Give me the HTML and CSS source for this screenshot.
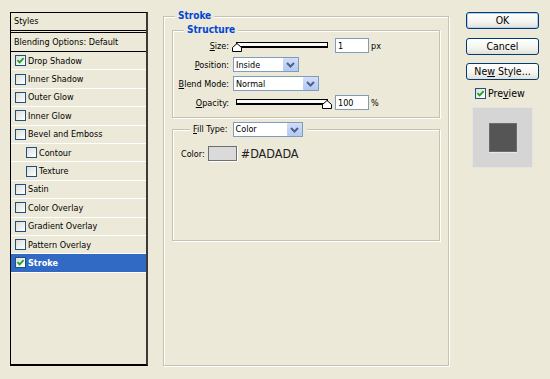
FILE: index.html
```html
<!DOCTYPE html>
<html lang="en">
<head>
  <meta charset="UTF-8">
  <meta name="viewport" content="width=device-width, initial-scale=1.0">
  <title>Layer Style</title>
  <link rel="stylesheet" href="styles.css">
</head>
<body>
  <div class="dialog">

    <!-- lista de estilos -->
    <div class="styles-list">
      <div class="list-head">Styles</div>
      <div class="list-blend">Blending Options: Default</div>
      <div class="list-item"><span class="check"><svg width="9" height="9" viewBox="0 0 9 9"><path d="M1.5 4.2 L3.6 6.4 L7.6 2.2" fill="none" stroke="#21A121" stroke-width="1.8"/></svg></span>Drop Shadow</div>
      <div class="list-item"><span class="check"></span>Inner Shadow</div>
      <div class="list-item"><span class="check"></span>Outer Glow</div>
      <div class="list-item"><span class="check"></span>Inner Glow</div>
      <div class="list-item"><span class="check"></span>Bevel and Emboss</div>
      <div class="list-item sub"><span class="check"></span>Contour</div>
      <div class="list-item sub"><span class="check"></span>Texture</div>
      <div class="list-item"><span class="check"></span>Satin</div>
      <div class="list-item"><span class="check"></span>Color Overlay</div>
      <div class="list-item"><span class="check"></span>Gradient Overlay</div>
      <div class="list-item"><span class="check"></span>Pattern Overlay</div>
      <div class="list-item selected"><span class="check"><svg width="9" height="9" viewBox="0 0 9 9"><path d="M1.5 4.2 L3.6 6.4 L7.6 2.2" fill="none" stroke="#21A121" stroke-width="1.8"/></svg></span>Stroke</div>
    </div>

    <!-- painel Stroke -->
    <fieldset class="group main">
      <legend>Stroke</legend>

      <fieldset class="group structure">
        <legend>Structure</legend>
        <div class="rows">
          <div class="form-row">
            <span class="lbl"><u>S</u>ize:</span>
            <div class="slider">
              <div class="track">
                <svg class="thumb" style="left: 0%" width="10" height="9" viewBox="0 0 10 9"><path d="M0.5 8.5 V4.5 L5 0.5 L9.5 4.5 V8.5 Z" fill="#fff" stroke="#000"/></svg>
              </div>
            </div>
            <input class="num" type="text" value="1">
            <span class="unit">px</span>
          </div>
          <div class="form-row">
            <span class="lbl"><u>P</u>osition:</span>
            <div class="select select-position">
              <span>Inside</span>
              <span class="arrow"><svg width="9" height="6" viewBox="0 0 9 6"><path d="M1 1 L4.5 4.5 L8 1" fill="none" stroke="#4D6185" stroke-width="2"/></svg></span>
            </div>
          </div>
          <div class="form-row">
            <span class="lbl"><u>B</u>lend Mode:</span>
            <div class="select select-blend">
              <span>Normal</span>
              <span class="arrow"><svg width="9" height="6" viewBox="0 0 9 6"><path d="M1 1 L4.5 4.5 L8 1" fill="none" stroke="#4D6185" stroke-width="2"/></svg></span>
            </div>
          </div>
          <div class="form-row">
            <span class="lbl"><u>O</u>pacity:</span>
            <div class="slider">
              <div class="track">
                <svg class="thumb" style="left: 100%" width="10" height="9" viewBox="0 0 10 9"><path d="M0.5 8.5 V4.5 L5 0.5 L9.5 4.5 V8.5 Z" fill="#fff" stroke="#000"/></svg>
              </div>
            </div>
            <input class="num" type="text" value="100">
            <span class="unit">%</span>
          </div>
        </div>
      </fieldset>

      <fieldset class="group fill">
        <legend class="fill-legend">
          <span class="fill-label"><u>F</u>ill Type:</span>
          <span class="select select-fill">
            <span>Color</span>
            <span class="arrow"><svg width="9" height="6" viewBox="0 0 9 6"><path d="M1 1 L4.5 4.5 L8 1" fill="none" stroke="#4D6185" stroke-width="2"/></svg></span>
          </span>
        </legend>
        <div class="color-row">
          <span>Color:</span>
          <span class="swatch"></span>
          <span class="hex">#DADADA</span>
        </div>
      </fieldset>
    </fieldset>

    <!-- botões -->
    <div class="side">
      <button class="btn btn-default">OK</button>
      <button class="btn btn-cancel">Cancel</button>
      <button class="btn btn-new">Ne<u>w</u> Style...</button>
      <label class="preview-check"><span class="check"><svg width="9" height="9" viewBox="0 0 9 9"><path d="M1.5 4.2 L3.6 6.4 L7.6 2.2" fill="none" stroke="#21A121" stroke-width="1.8"/></svg></span>Pre<u>v</u>iew</label>
      <div class="preview-box">
        <div class="preview-square"></div>
      </div>
    </div>

  </div>
</body>
</html>
```

FILE: styles.css
```css
:root {
  --face: #ECE9D8;
  --etch: #C5C2B2;
  --legend: #0046D5;
  --highlight: #316AC5;
  --field: #7F9DB9;
}

* {
  box-sizing: border-box;
  margin: 0;
  padding: 0;
}

body {
  width: 550px;
  height: 379px;
  overflow: hidden;
  background: var(--face);
  font-family: "DejaVu Sans Condensed", "DejaVu Sans", sans-serif;
  font-stretch: condensed;
  font-size: 9px;
  color: #000;
}

.dialog {
  display: flex;
  align-items: flex-start;
  padding: 10px 0 0 10px;
}

/* lista */
.styles-list {
  width: 138px;
  height: 354px;
  margin-top: 2px;
  border: 1px solid #000;
  border-right: 2px solid #3a3a3a;
  border-bottom-width: 2px;
}

.list-head {
  height: 20px;
  line-height: 17px;
  padding-left: 3px;
  border-bottom: 3px double #000;
}

.list-blend {
  height: 19px;
  line-height: 18px;
  padding-left: 3px;
  border-bottom: 1px solid #000;
}

.list-item {
  display: flex;
  align-items: center;
  height: 18.4px;
  padding-left: 4px;
  border-bottom: 1px solid #fff;
}

.list-item.sub {
  padding-left: 15px;
}

.list-item.selected {
  background: var(--highlight);
  color: #fff;
  font-weight: bold;
}

.check {
  flex: none;
  display: flex;
  align-items: center;
  justify-content: center;
  width: 11px;
  height: 11px;
  margin-right: 2px;
  border: 1px solid #1C5180;
  background: linear-gradient(135deg, #DCDCD7, #fff);
}

/* grupos */
.group {
  min-width: 0;
  border: 1px solid var(--etch);
  box-shadow: inset 1px 1px 0 #fff, 1px 1px 0 #fff;
}

.group > legend {
  padding: 0 3px;
  line-height: 12px;
  background: var(--face);
  color: var(--legend);
  font-weight: bold;
  font-size: 10px;
}

.main {
  width: 286px;
  height: 356px;
  margin-left: 15px;
  padding: 2px 8px 0;
}

.main > legend {
  margin-left: 3px;
}

.structure {
  height: 94px;
  padding: 2px 0 7px;
}

.structure > legend {
  margin-left: 11px;
}

.rows {
  display: flex;
  flex-direction: column;
  gap: 4px;
}

.form-row {
  display: flex;
  align-items: center;
  height: 15px;
}

.lbl {
  width: 56px;
  margin-right: 4px;
  text-align: right;
}

.slider {
  width: 96px;
  height: 15px;
  margin-right: 6px;
}

.track {
  position: relative;
  width: 92px;
  height: 6px;
  margin: 4px 0 0 3px;
  border: 1px solid #000;
  border-bottom-width: 2px;
  background: #FAFAF6;
}

.thumb {
  position: absolute;
  top: 0;
  transform: translateX(-50%);
}

.num {
  width: 34px;
  height: 15px;
  padding-left: 2px;
  border: 1px solid var(--field);
  background: #fff;
  font: inherit;
  color: #000;
  outline: none;
}

.unit {
  margin-left: 2px;
}

.select {
  display: flex;
  align-items: center;
  justify-content: space-between;
  height: 15px;
  padding-left: 2px;
  border: 1px solid var(--field);
  background: #fff;
  color: #000;
  font-weight: normal;
  font-size: 9px;
}

.select .arrow {
  display: flex;
  align-items: center;
  justify-content: center;
  width: 15px;
  height: 13px;
  border-radius: 1px;
  background: linear-gradient(#D2DEF9, #B4C8F5);
}

.select-position {
  width: 66px;
}

.select-blend {
  width: 86px;
}

.select-fill {
  width: 70px;
}

.fill {
  height: 119px;
  margin-top: 4px;
  padding: 9px 8px 0;
}

.group > legend.fill-legend {
  display: flex;
  align-items: center;
  gap: 5px;
  margin-left: 9px;
  padding: 0 4px 0 3px;
  line-height: 15px;
  color: #000;
  font-weight: normal;
  font-size: 9px;
}

.color-row {
  display: flex;
  align-items: center;
  height: 15px;
}

.swatch {
  width: 29px;
  height: 15px;
  margin-left: 3px;
  border: 1px solid #6F6F6F;
  box-shadow: 1px 1px 0 #fff;
  background: #DADADA;
}

.hex {
  margin-left: 4px;
  font-size: 12.5px;
  color: #222;
}

/* coluna direita */
.side {
  display: flex;
  flex-direction: column;
  align-items: flex-start;
  margin-left: 17px;
  padding-top: 2px;
}

.btn {
  width: 73px;
  height: 17px;
  border: 1px solid #003C74;
  border-radius: 3px;
  background: linear-gradient(#fff, #F4F4EF 60%, #E2E0D6);
  font: inherit;
  font-size: 10.5px;
  line-height: 15px;
  color: #000;
}

.btn-default {
  box-shadow: inset 0 0 0 1px #B6CBF2;
}

.btn-cancel {
  margin-top: 9px;
}

.btn-new {
  margin-top: 8px;
}

.preview-check {
  display: flex;
  align-items: center;
  height: 12px;
  margin: 7px 0 0 9px;
  font-size: 10.5px;
}

.preview-box {
  display: flex;
  align-items: center;
  justify-content: center;
  width: 61px;
  height: 61px;
  margin: 8px 0 0 6px;
  border: 1px solid #E4E4E4;
  background: #D5D5D5;
}

.preview-square {
  width: 28px;
  height: 29px;
  border: 1px solid #6C6C6C;
  box-shadow: 0 1px 0 #E8E8E8;
  background: #555;
}
```
